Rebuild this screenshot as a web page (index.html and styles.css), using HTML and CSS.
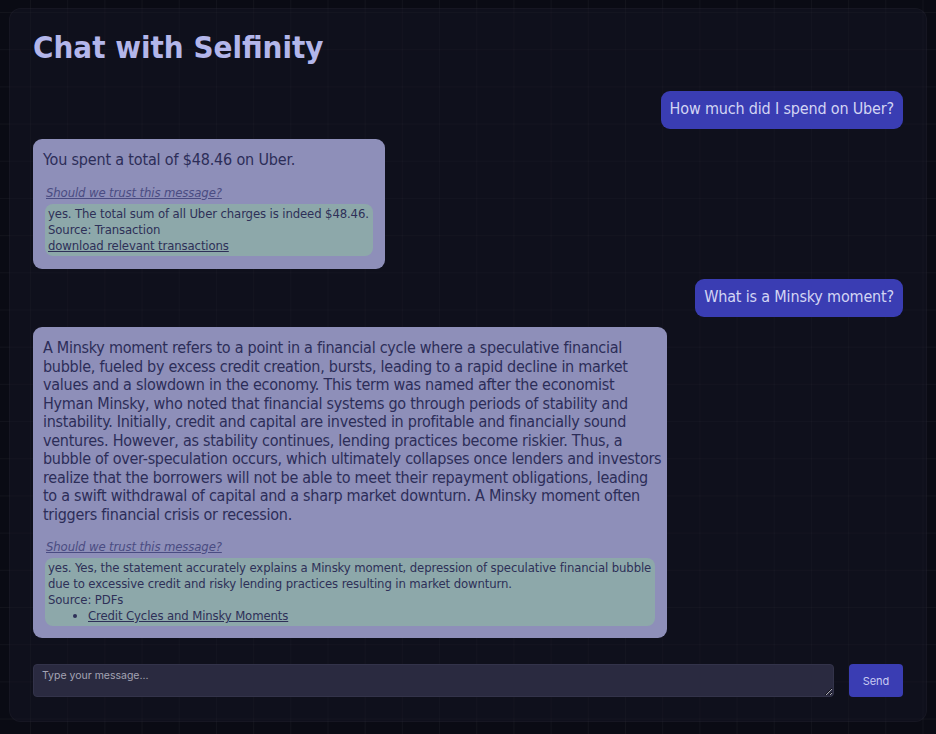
FILE: index.html
```html
<!DOCTYPE html>
<html lang="en">
<head>
<meta charset="utf-8">
<title>Chat with Selfinity</title>
<link rel="stylesheet" href="styles.css">
</head>
<body>
<main class="panel">
  <h1 class="title">Chat with Selfinity</h1>
  <section class="messages">
    <div class="msg user"><div class="bubble user-bubble">How much did I spend on Uber?</div></div>
    <div class="msg bot">
      <div class="bubble bot-bubble">
        <p class="answer">You spent a total of $48.46 on Uber.</p>
        <div class="trust">
          <a class="trust-q" href="#">Should we trust this message?</a>
          <div class="verdict">
            yes. The total sum of all Uber charges is indeed $48.46.<br>
            Source: Transaction<br>
            <a href="#">download relevant transactions</a>
          </div>
        </div>
      </div>
    </div>
    <div class="msg user"><div class="bubble user-bubble">What is a Minsky moment?</div></div>
    <div class="msg bot">
      <div class="bubble bot-bubble wide">
        <p class="answer">A Minsky moment refers to a point in a financial cycle where a speculative financial<br> bubble, fueled by excess credit creation, bursts, leading to a rapid decline in market<br> values and a slowdown in the economy. This term was named after the economist<br> Hyman Minsky, who noted that financial systems go through periods of stability and<br> instability. Initially, credit and capital are invested in profitable and financially sound<br> ventures. However, as stability continues, lending practices become riskier. Thus, a<br> bubble of over-speculation occurs, which ultimately collapses once lenders and investors<br> realize that the borrowers will not be able to meet their repayment obligations, leading<br> to a swift withdrawal of capital and a sharp market downturn. A Minsky moment often<br> triggers financial crisis or recession.</p>
        <div class="trust">
          <a class="trust-q" href="#">Should we trust this message?</a>
          <div class="verdict">
            yes. Yes, the statement accurately explains a Minsky moment, depression of speculative financial bubble<br> due to excessive credit and risky lending practices resulting in market downturn.<br>
            Source: PDFs
            <ul class="sources"><li><a href="#">Credit Cycles and Minsky Moments</a></li></ul>
          </div>
        </div>
      </div>
    </div>
  </section>
  <form class="composer">
    <textarea class="input" placeholder="Type your message..."></textarea>
    <button class="send" type="button">Send</button>
  </form>
</main>
</body>
</html>
```

FILE: styles.css
```css
html, body {
  height: 100%;
}
body {
  margin: 8px;
  background-color: #0a0b14;
  background-image:
    linear-gradient(to right, rgba(255,255,255,0.035) 1px, transparent 1px),
    linear-gradient(to bottom, rgba(255,255,255,0.035) 1px, transparent 1px);
  background-size: 37.2px 37.2px;
  background-position: 30px 12px;
  font-family: "DejaVu Sans Condensed", "DejaVu Sans", sans-serif;
  box-sizing: border-box;
}
.panel {
  box-sizing: border-box;
  height: 714px;
  margin: 0 1px;
  border: 1px solid rgba(255,255,255,0.03);
  border-radius: 12px;
  background: rgba(22, 22, 38, 0.45);
  padding: 16px 23px 24px 23px;
  display: flex;
  flex-direction: column;
}
.title {
  margin: 0;
  font-family: "DejaVu Sans Condensed", "DejaVu Sans", sans-serif;
  font-weight: bold;
  font-size: 31px;
  line-height: 44px;
  color: #b3b6ea;
}
.messages {
  flex: 1;
  display: flex;
  flex-direction: column;
  gap: 10.5px;
  margin-top: 22px;
  overflow: hidden;
}
.msg {
  display: flex;
}
.msg.user {
  justify-content: flex-end;
}
.bubble {
  border-radius: 9px;
  font-size: 16px;
  line-height: 18.5px;
  letter-spacing: -0.17px;
}
.user-bubble {
  background: #3a3db3;
  color: #d3d5f3;
  padding: 9px 9px 10px 9px;
}
.bot-bubble {
  background: #8e8fb9;
  color: #2c2d58;
  padding: 12px 12px 13px 10px;
  max-width: 73%;
  box-sizing: border-box;
}
.bot-bubble.wide {
  width: 634px;
  padding-bottom: 12px;
}
.bot-bubble.wide .answer {
  letter-spacing: -0.27px;
}
.answer {
  margin: 0;
  white-space: nowrap;
}
.trust {
  margin-top: 15px;
  padding-left: 2px;
  font-size: 13px;
  line-height: 16px;
  letter-spacing: -0.12px;
}
.trust-q {
  display: block;
  color: #4a4c82;
  font-style: italic;
  text-decoration: underline;
  padding-left: 1px;
  margin-bottom: 3px;
}
.verdict {
  background: #8da8aa;
  border-radius: 8px;
  padding: 2px 4px 2px 3px;
  color: #2e3058;
  white-space: nowrap;
}
.verdict a {
  color: #2e3058;
  text-decoration: underline;
}
.sources {
  margin: 0;
  padding-left: 40px;
}
.composer {
  display: flex;
  gap: 15px;
  margin: 0;
}
.input {
  flex: 1;
  height: 33px;
  box-sizing: border-box;
  background: #2a2a40;
  border: 1px solid #33334a;
  border-radius: 4px;
  padding: 4px 8px;
  font-family: Inter, "Noto Sans", sans-serif;
  font-size: 10.5px;
  color: #c8c8d8;
  resize: vertical;
}
.input::placeholder {
  color: #a4a4b4;
}
.send {
  width: 54px;
  height: 33px;
  border: none;
  border-radius: 4px;
  background: #3a3db3;
  color: #c8cbf2;
  font-family: Inter, "Noto Sans", sans-serif;
  font-size: 11px;
}
```
